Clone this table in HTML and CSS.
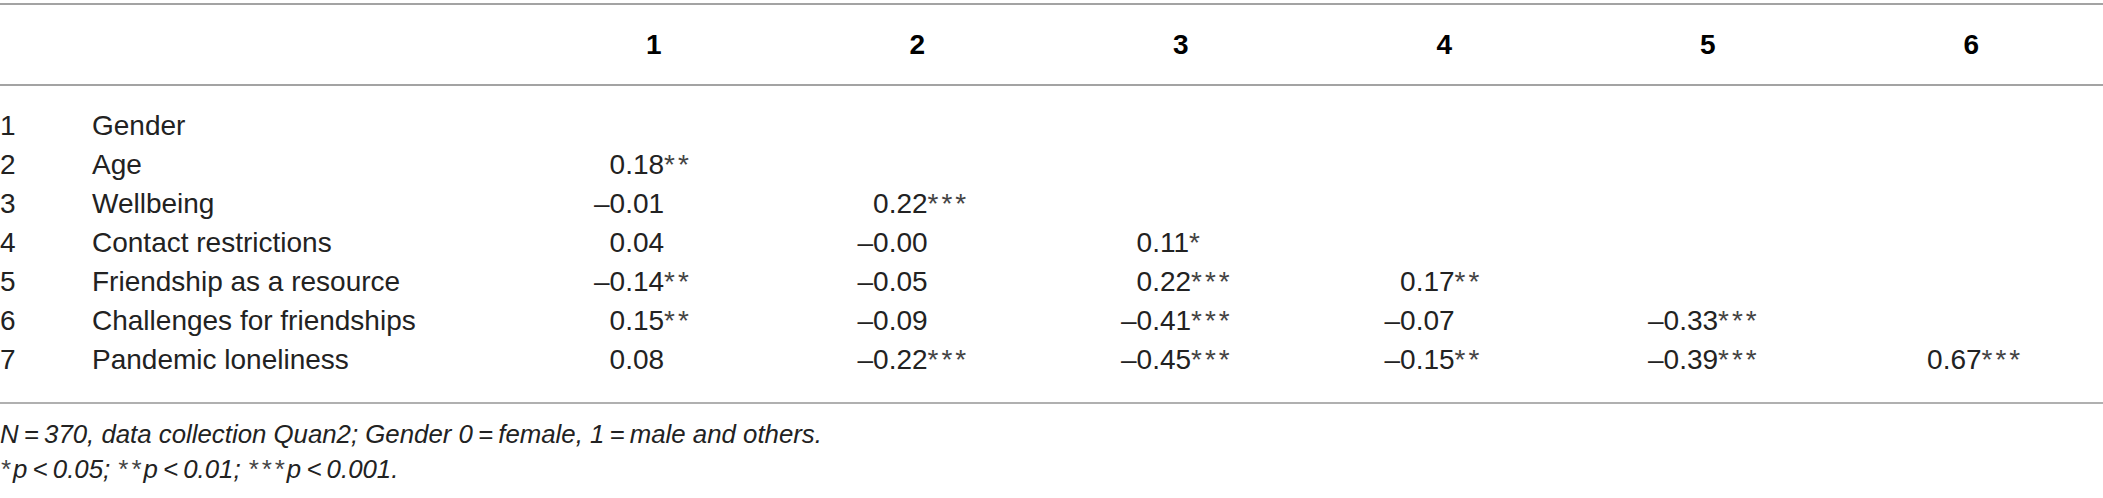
FILE: index.html
```html
<!DOCTYPE html>
<html lang="en">
<head>
<meta charset="utf-8">
<title>Correlations</title>
<link rel="stylesheet" href="styles.css">
</head>
<body>
<div class="table">
  <div class="row head">
    <div class="num"></div>
    <div class="label"></div>
    <div class="h">1</div>
    <div class="h">2</div>
    <div class="h">3</div>
    <div class="h">4</div>
    <div class="h">5</div>
    <div class="h">6</div>
  </div>
  <div class="tbody">
    <div class="row">
      <div class="num">1</div><div class="label">Gender</div>
      <div class="v"></div><div class="v"></div><div class="v"></div><div class="v"></div><div class="v"></div><div class="v"></div>
    </div>
    <div class="row">
      <div class="num">2</div><div class="label">Age</div>
      <div class="v">&#8199;0.18<span class="s">**</span></div><div class="v"></div><div class="v"></div><div class="v"></div><div class="v"></div><div class="v"></div>
    </div>
    <div class="row">
      <div class="num">3</div><div class="label">Wellbeing</div>
      <div class="v">–0.01</div><div class="v">&#8199;0.22<span class="s">***</span></div><div class="v"></div><div class="v"></div><div class="v"></div><div class="v"></div>
    </div>
    <div class="row">
      <div class="num">4</div><div class="label">Contact restrictions</div>
      <div class="v">&#8199;0.04</div><div class="v">–0.00</div><div class="v">&#8199;0.11<span class="s">*</span></div><div class="v"></div><div class="v"></div><div class="v"></div>
    </div>
    <div class="row">
      <div class="num">5</div><div class="label">Friendship as a resource</div>
      <div class="v">–0.14<span class="s">**</span></div><div class="v">–0.05</div><div class="v">&#8199;0.22<span class="s">***</span></div><div class="v">&#8199;0.17<span class="s">**</span></div><div class="v"></div><div class="v"></div>
    </div>
    <div class="row">
      <div class="num">6</div><div class="label">Challenges for friendships</div>
      <div class="v">&#8199;0.15<span class="s">**</span></div><div class="v">–0.09</div><div class="v">–0.41<span class="s">***</span></div><div class="v">–0.07</div><div class="v">–0.33<span class="s">***</span></div><div class="v"></div>
    </div>
    <div class="row">
      <div class="num">7</div><div class="label">Pandemic loneliness</div>
      <div class="v">&#8199;0.08</div><div class="v">–0.22<span class="s">***</span></div><div class="v">–0.45<span class="s">***</span></div><div class="v">–0.15<span class="s">**</span></div><div class="v">–0.39<span class="s">***</span></div><div class="v">&#8199;0.67<span class="s">***</span></div>
    </div>
  </div>
</div>
<div class="notes">
  <p><i>N</i>&#8201;=&#8201;370, data collection Quan2; Gender 0&#8201;=&#8201;female, 1&#8201;=&#8201;male and others.</p>
  <p><span class="s">*</span><i>p</i>&#8201;&lt;&#8201;0.05; <span class="s">**</span><i>p</i>&#8201;&lt;&#8201;0.01; <span class="s">***</span><i>p</i>&#8201;&lt;&#8201;0.001.</p>
</div>
</body>
</html>
```
FILE: styles.css
```css
html, body {
  margin: 0;
  padding: 0;
  background: #ffffff;
}
body {
  width: 2103px;
  font-family: "Liberation Sans", Arial, sans-serif;
  color: #222222;
}
.table {
  margin-top: 3px;
  border-top: 2px solid #a3a3a3;
  border-bottom: 2px solid #b0b0b0;
}
.row {
  display: grid;
  grid-template-columns: 92px 430px repeat(6, 1fr);
  font-size: 28px;
  line-height: 39px;
  height: 39px;
}
.row.head {
  height: 79px;
  align-items: center;
  border-bottom: 2px solid #a3a3a3;
}
.h {
  text-align: center;
  font-weight: bold;
  color: #000;
}
.tbody {
  padding: 20px 0 23px;
}
.num, .label {
  white-space: nowrap;
}
.v {
  padding-left: 72px;
  white-space: nowrap;
}
.s {
  color: #444;
  letter-spacing: 3px;
}
.notes {
  padding-top: 13px;
  font-size: 25.8px;
  line-height: 35px;
  font-style: italic;
  color: #222222;
}
.notes p {
  margin: 0;
}
```
